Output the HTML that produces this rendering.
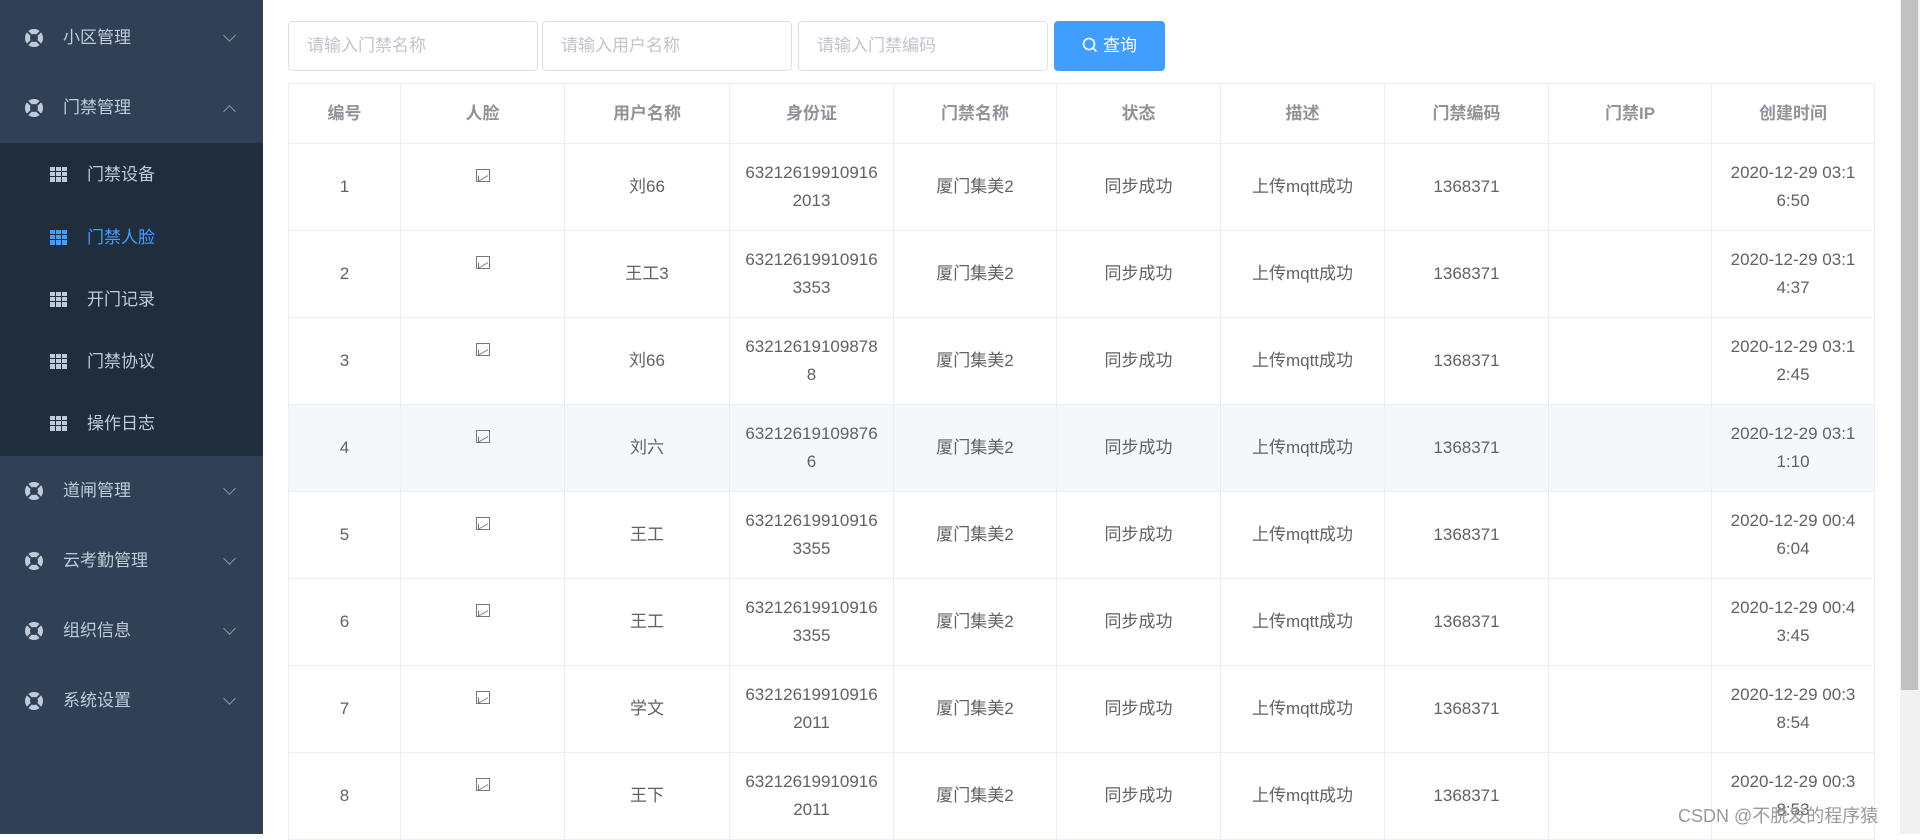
<!DOCTYPE html>
<html><head><meta charset="utf-8"><style>
*{margin:0;padding:0;box-sizing:border-box}
body{width:1920px;height:834px;overflow:hidden;background:#fff;font-family:"Liberation Sans","Noto Sans CJK SC",sans-serif;position:relative}
.side{position:absolute;left:0;top:0;width:263px;height:834px;background:#304156}
.sub{position:absolute;left:0;top:143px;width:263px;height:313px;background:#1f2d3d}
.mi{position:absolute;left:0;width:263px;height:40px;line-height:40px;color:#bfcbd9;font-size:17px}
.mi .ic{position:absolute;left:25px;top:11px;width:18px;height:18px;border-radius:50%;border:5px solid #bfcbd9;}
.mi .ic:before{content:"";position:absolute;left:-6px;top:3px;width:20px;height:2px;background:#304156;transform:rotate(45deg)}
.mi .ic:after{content:"";position:absolute;left:-6px;top:3px;width:20px;height:2px;background:#304156;transform:rotate(-45deg)}
.mi .t{position:absolute;left:63px}
.mi .ch{position:absolute;left:225px;top:13px;width:9px;height:9px;border-right:1.3px solid #8a96a4;border-bottom:1.3px solid #8a96a4;transform:rotate(45deg)}
.mi .ch.up{top:19px;transform:rotate(-135deg)}
.si{position:absolute;left:0;width:263px;height:40px;line-height:40px;color:#bfcbd9;font-size:17px}
.si .g{position:absolute;left:50px;top:12px;width:17px;height:15px;background:
linear-gradient(#1f2d3d,#1f2d3d) 0 4px/17px 1px no-repeat,
linear-gradient(#1f2d3d,#1f2d3d) 0 9px/17px 1px no-repeat,
linear-gradient(#1f2d3d,#1f2d3d) 5px 0/1px 15px no-repeat,
linear-gradient(#1f2d3d,#1f2d3d) 11px 0/1px 15px no-repeat,#bfcbd9}
.si.act{color:#409eff}.si.act .g{background-color:#409eff}
.si .t{position:absolute;left:87px}
.inp{position:absolute;top:21px;height:50px;width:250px;border:1px solid #dcdfe6;border-radius:4px;color:#c0c4cc;font-size:17px;line-height:48px;padding-left:18px}
.btn{position:absolute;left:1054px;top:21px;width:111px;height:50px;background:#409eff;border-radius:4px;color:#fff;font-size:17px;line-height:50px;text-align:center}
table{position:absolute;left:288px;top:83px;width:1586px;border-collapse:collapse;table-layout:fixed}
td,th{border:1px solid #ebeef5;text-align:center;font-size:17px;color:#606266;font-weight:normal;line-height:28px;padding:0 12px;word-break:break-all}
td:last-child{padding:0 16px}
th{height:60px;color:#909399;font-weight:bold}
td{height:87px}
tr.h td{background:#f5f7fa}
.img{display:inline-block;width:14px;height:13px;border:1.3px solid #777;position:relative;top:-10px}
.img:after{content:"";position:absolute;left:1px;top:3px;width:9px;height:5px;border-left:1.3px solid #777;border-bottom:1.3px solid #777;transform:skewY(-30deg)}
.sb{position:absolute;left:1900px;top:0;width:20px;height:834px;background:#f1f1f1}
.th{position:absolute;left:1901px;top:0;width:17px;height:690px;background:#c1c1c1}
.wm{position:absolute;left:1678px;top:802px;font-size:18px;color:#999}
</style></head><body>
<div class="side">
<div class="sub"></div>
<div class="mi" style="top:18px"><span class="ic"></span><span class="t">小区管理</span><span class="ch"></span></div>
<div class="mi" style="top:88px"><span class="ic"></span><span class="t">门禁管理</span><span class="ch up"></span></div>
<div class="si" style="top:155px"><span class="g"></span><span class="t">门禁设备</span></div>
<div class="si act" style="top:218px"><span class="g"></span><span class="t">门禁人脸</span></div>
<div class="si" style="top:280px"><span class="g"></span><span class="t">开门记录</span></div>
<div class="si" style="top:342px"><span class="g"></span><span class="t">门禁协议</span></div>
<div class="si" style="top:404px"><span class="g"></span><span class="t">操作日志</span></div>
<div class="mi" style="top:471px"><span class="ic"></span><span class="t">道闸管理</span><span class="ch"></span></div>
<div class="mi" style="top:541px"><span class="ic"></span><span class="t">云考勤管理</span><span class="ch"></span></div>
<div class="mi" style="top:611px"><span class="ic"></span><span class="t">组织信息</span><span class="ch"></span></div>
<div class="mi" style="top:681px"><span class="ic"></span><span class="t">系统设置</span><span class="ch"></span></div>
</div>
<div class="inp" style="left:288px">请输入门禁名称</div>
<div class="inp" style="left:542px">请输入用户名称</div>
<div class="inp" style="left:798px">请输入门禁编码</div>
<div class="btn"><svg width="16" height="16" viewBox="0 0 16 16" style="vertical-align:-2px;margin-right:5px"><circle cx="7" cy="7" r="5.5" fill="none" stroke="#fff" stroke-width="1.6"/><path d="M11 11l3.5 3.5" stroke="#fff" stroke-width="1.6"/></svg>查询</div>
<table>
<colgroup><col style="width:112px"><col style="width:164px"><col style="width:165px"><col style="width:164px"><col style="width:163px"><col style="width:164px"><col style="width:164px"><col style="width:164px"><col style="width:163px"><col style="width:163px"></colgroup>
<tr><th>编号</th><th>人脸</th><th>用户名称</th><th>身份证</th><th>门禁名称</th><th>状态</th><th>描述</th><th>门禁编码</th><th>门禁IP</th><th>创建时间</th></tr>
<tr><td>1</td><td><span class="img"></span></td><td>刘66</td><td>632126199109162013</td><td>厦门集美2</td><td>同步成功</td><td>上传mqtt成功</td><td>1368371</td><td></td><td>2020-12-29 03:16:50</td></tr>
<tr><td>2</td><td><span class="img"></span></td><td>王工3</td><td>632126199109163353</td><td>厦门集美2</td><td>同步成功</td><td>上传mqtt成功</td><td>1368371</td><td></td><td>2020-12-29 03:14:37</td></tr>
<tr><td>3</td><td><span class="img"></span></td><td>刘66</td><td>632126191098788</td><td>厦门集美2</td><td>同步成功</td><td>上传mqtt成功</td><td>1368371</td><td></td><td>2020-12-29 03:12:45</td></tr>
<tr class="h"><td>4</td><td><span class="img"></span></td><td>刘六</td><td>632126191098766</td><td>厦门集美2</td><td>同步成功</td><td>上传mqtt成功</td><td>1368371</td><td></td><td>2020-12-29 03:11:10</td></tr>
<tr><td>5</td><td><span class="img"></span></td><td>王工</td><td>632126199109163355</td><td>厦门集美2</td><td>同步成功</td><td>上传mqtt成功</td><td>1368371</td><td></td><td>2020-12-29 00:46:04</td></tr>
<tr><td>6</td><td><span class="img"></span></td><td>王工</td><td>632126199109163355</td><td>厦门集美2</td><td>同步成功</td><td>上传mqtt成功</td><td>1368371</td><td></td><td>2020-12-29 00:43:45</td></tr>
<tr><td>7</td><td><span class="img"></span></td><td>学文</td><td>632126199109162011</td><td>厦门集美2</td><td>同步成功</td><td>上传mqtt成功</td><td>1368371</td><td></td><td>2020-12-29 00:38:54</td></tr>
<tr><td>8</td><td><span class="img"></span></td><td>王下</td><td>632126199109162011</td><td>厦门集美2</td><td>同步成功</td><td>上传mqtt成功</td><td>1368371</td><td></td><td>2020-12-29 00:38:53</td></tr>
</table>
<div class="sb"></div><div class="th"></div>
<div class="wm">CSDN @不脱发的程序猿</div>
</body></html>
